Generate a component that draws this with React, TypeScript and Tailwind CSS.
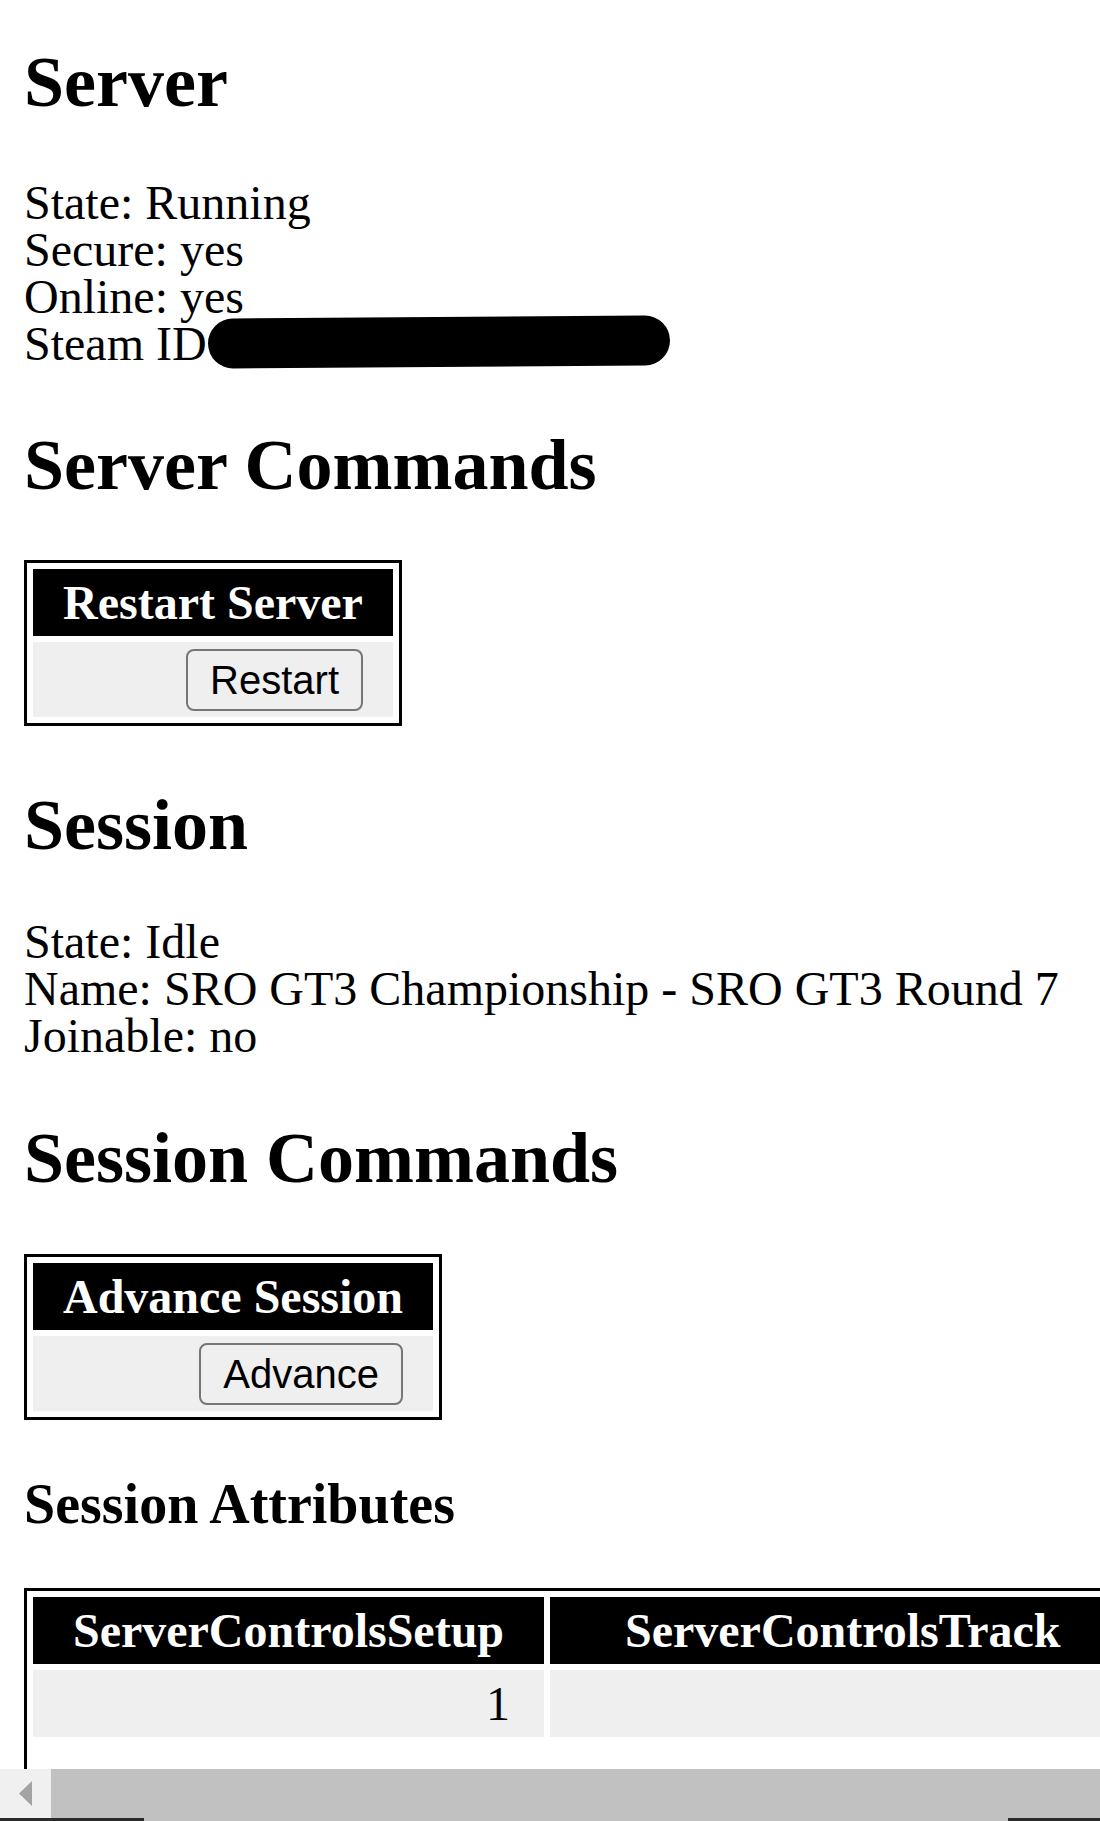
const serif = { fontFamily: '"Liberation Serif", "Times New Roman", serif' };

const CommandBox = ({ title, action, width }: { title: string; action: string; width: string }) => (
  <table className="border-separate border-spacing-[6px] border-[3px] border-black">
    <tbody>
      <tr>
        <th className={`${width} h-[67px] bg-black text-white text-[48px] leading-[67px] font-bold text-center p-0`}>{title}</th>
      </tr>
      <tr>
        <td className="h-[75px] bg-[#efefef] text-right pr-[30px] py-0 align-middle">
          <button className="h-[62px] px-[22px] border-2 border-[#767676] rounded-[8px] bg-[#efefef] text-black text-[40px] leading-none font-['Liberation_Sans',Arial,sans-serif]">
            {action}
          </button>
        </td>
      </tr>
    </tbody>
  </table>
);

export default function App() {
  return (
    <div className="w-[1100px] h-[1821px] overflow-hidden flex flex-col bg-white text-black" style={serif}>
      <main className="h-[1769px] overflow-hidden pl-[24px] pt-[42px]">
        <h2 className="text-[72px] leading-[80px] font-bold">Server</h2>
        <div className="mt-[57px] text-[48px] leading-[47px]">
          <div>State: Running</div>
          <div>Secure: yes</div>
          <div>Online: yes</div>
          <div>
            Steam ID
            <span className="inline-block align-top h-[50px] -mt-[3px] w-[462px] ml-[1px] rounded-full bg-black -rotate-[0.4deg]"></span>
          </div>
        </div>

        <h2 className="mt-[58px] text-[72px] leading-[80px] font-bold">Server Commands</h2>
        <div className="mt-[55px]">
          <CommandBox title="Restart Server" action="Restart" width="w-[360px]" />
        </div>

        <h2 className="mt-[59px] text-[72px] leading-[80px] font-bold">Session</h2>
        <div className="mt-[53px] text-[48px] leading-[47px]">
          <div>State: Idle</div>
          <div>Name: SRO GT3 Championship - SRO GT3 Round 7</div>
          <div>Joinable: no</div>
        </div>

        <h2 className="mt-[59px] text-[72px] leading-[80px] font-bold">Session Commands</h2>
        <div className="mt-[56px]">
          <CommandBox title="Advance Session" action="Advance" width="w-[400px]" />
        </div>

        <h3 className="mt-[53px] text-[56px] leading-[62px] font-bold">Session Attributes</h3>
        <table className="mt-[53px] table-fixed w-[1200px] border-separate border-spacing-[6px] border-[3px] border-black">
          <tbody>
            <tr>
              <th className="w-[511px] h-[67px] bg-black text-white text-[48px] leading-[67px] font-bold text-center p-0">ServerControlsSetup</th>
              <th className="h-[67px] bg-black text-white text-[48px] leading-[67px] font-bold text-left pl-[75px] p-0">ServerControlsTrack</th>
            </tr>
            <tr>
              <td className="h-[67px] bg-[#efefef] text-right pr-[34px] text-[48px] leading-[67px] py-0">1</td>
              <td className="h-[67px] bg-[#efefef]"></td>
            </tr>
            <tr>
              <td className="h-[60px]"></td>
              <td className="h-[60px]"></td>
            </tr>
          </tbody>
        </table>
      </main>

      <div className="h-[52px] flex flex-col">
        <div className="h-[49px] flex">
          <div className="w-[51px] bg-[#f0f0f0] flex items-center pl-[19px]">
            <svg width="13" height="25" viewBox="0 0 13 25">
              <polygon points="13,0 13,25 0,12.5" fill="#a3a3a3" />
            </svg>
          </div>
          <div className="flex-1 bg-[#c1c1c1]"></div>
        </div>
        <div className="h-[3px] flex">
          <div className="w-[144px] bg-[#2b2b2b]"></div>
          <div className="flex-1 bg-[#c1c1c1]"></div>
          <div className="w-[92px] bg-[#2b2b2b]"></div>
        </div>
      </div>
    </div>
  );
}
